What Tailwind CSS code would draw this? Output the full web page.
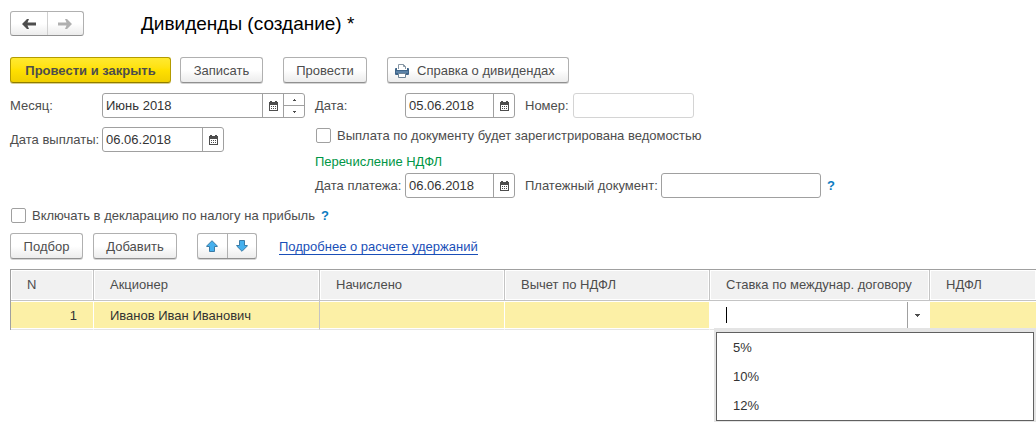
<!DOCTYPE html>
<html lang="ru">
<head>
<meta charset="utf-8">
<meta name="viewport" content="width=device-width, initial-scale=1">
<title>Дивиденды (создание) *</title>
<script src="https://cdn.jsdelivr.net/npm/@tailwindcss/browser@4"></script>
</head>
<body class="bg-white text-[#4d4d4d] font-['Liberation_Sans',Arial,sans-serif] text-[13px] leading-4">
<svg class="hidden" aria-hidden="true">
  <symbol id="calendar" viewBox="0 0 9 10">
    <path d="M0 1h9v9H0z M1 0h2v1H1z M6 0h2v1H6z" fill="#4d4d4d"/>
    <path d="M1 4h7v5H1z" fill="#fff"/>
    <path d="M2 5h1v1H2z M4 5h1v1H4z M6 5h1v1H6z M2 7h1v1H2z M4 7h1v1H4z M6 7h1v1H6z" fill="#4d4d4d"/>
  </symbol>
</svg>
<main class="min-h-screen pl-[10px] pt-[11px]">
  <header class="flex items-center h-[25px]">
    <div class="flex w-[74px] h-[25px] border border-[#b0b0b0] border-b-[#909090] rounded-[3px] bg-linear-to-b from-white from-50% to-[#ececec]">
      <button type="button" aria-label="Назад" class="flex-1 flex items-center justify-center border-r border-[#d0d0d0]">
        <svg class="w-[14px] h-[10px]" viewBox="0 0 14 10"><path d="M0 5 5 0h2L5.500 3.500H14v3H5.500L7 10H5z" fill="#4d4d4d"/></svg>
      </button>
      <button type="button" aria-label="Вперед" class="flex-1 flex items-center justify-center">
        <svg class="w-[14px] h-[10px]" viewBox="0 0 14 10"><path d="M14 5 9 0H7l1.500 3.500H0v3h8.500L7 10h2z" fill="#b0b0b0"/></svg>
      </button>
    </div>
    <h1 class="ml-[57px] text-[19px] leading-6 text-black">Дивиденды (создание) *</h1>
  </header>

  <div class="flex mt-[21px] h-[26px] whitespace-nowrap">
    <button type="button" class="w-[161px] pt-px font-bold rounded-[3px] border border-[#b39b00] border-b-[#8f7c00] bg-linear-to-b from-[#ffe92e] via-[#ffe000] to-[#f0cf00] shadow-[0_1px_0_#d8cf90]">Провести и закрыть</button>
    <button type="button" class="ml-[9px] w-[83px] pt-px rounded-[3px] border border-[#b0b0b0] border-b-[#909090] bg-linear-to-b from-white from-50% to-[#ececec] shadow-[0_1px_0_#d4d4d4]">Записать</button>
    <button type="button" class="ml-5 w-[84px] pt-px rounded-[3px] border border-[#b0b0b0] border-b-[#909090] bg-linear-to-b from-white from-50% to-[#ececec] shadow-[0_1px_0_#d4d4d4]">Провести</button>
    <button type="button" class="ml-5 w-[182px] pt-px flex items-center pl-[7px] gap-2 rounded-[3px] border border-[#b0b0b0] border-b-[#909090] bg-linear-to-b from-white from-50% to-[#ececec] shadow-[0_1px_0_#d4d4d4]">
      <svg class="w-[14px] h-[14px]" viewBox="0 0 14 14">
        <path d="M3.500 5V.5h5l2 2V5" fill="#fff" stroke="#8797a5"/><path d="M8.500.5v2h2" fill="none" stroke="#8797a5"/>
        <path d="M0 5q0-1 1-1h1v2h10V4h1q1 0 1 1v5q0 1-1 1H1q-1 0-1-1z" fill="#3f658a"/><path d="M1 7h12v2H1z" fill="#5c83a8"/>
        <path d="M3.500 9.500h7v4h-7z" fill="#fff" stroke="#6f8496"/>
      </svg>
      <span>Справка о дивидендах</span>
    </button>
  </div>

  <form class="mt-[10px] whitespace-nowrap">
    <div class="flex gap-[10px]">
      <div class="w-[295px] flex flex-col gap-[9px]">
        <div class="flex items-center h-[25px]">
          <label for="month" class="w-[92px]">Месяц:</label>
          <div class="flex flex-1 h-full border border-[#a0a0a0] rounded-[3px] overflow-hidden">
            <input id="month" value="Июнь 2018" class="flex-1 min-w-0 pl-[3px] text-[#333] outline-none">
            <button type="button" aria-label="Выбрать месяц" class="w-[21px] border-l border-[#a0a0a0] flex items-center justify-center"><svg class="w-[9px] h-[10px]"><use href="#calendar"/></svg></button>
            <div class="w-[21px] border-l border-[#a0a0a0] flex flex-col">
              <button type="button" aria-label="Больше" class="flex-1 border-b border-[#a0a0a0] flex items-center justify-center"><svg class="w-[3px] h-[2px]" viewBox="0 0 3 2"><path d="M1 0h1v1h1v1H0V1h1z" fill="#4d4d4d"/></svg></button>
              <button type="button" aria-label="Меньше" class="flex-1 flex items-center justify-center"><svg class="w-[3px] h-[2px]" viewBox="0 0 3 2"><path d="M0 0h3v1H2v1H1V1H0z" fill="#4d4d4d"/></svg></button>
            </div>
          </div>
        </div>
        <div class="flex items-center h-[25px]">
          <label for="paydate" class="w-[92px]">Дата выплаты:</label>
          <div class="flex w-[122px] h-full border border-[#a0a0a0] rounded-[3px] overflow-hidden">
            <input id="paydate" value="06.06.2018" class="flex-1 min-w-0 pl-[3px] text-[#333] outline-none">
            <button type="button" aria-label="Выбрать дату выплаты" class="w-[21px] border-l border-[#a0a0a0] flex items-center justify-center"><svg class="w-[9px] h-[10px]"><use href="#calendar"/></svg></button>
          </div>
        </div>
      </div>
      <div class="flex-1">
        <div class="flex items-center h-[25px]">
          <label for="date" class="w-[90px]">Дата:</label>
          <div class="flex w-[110px] h-full border border-[#a0a0a0] rounded-[3px] overflow-hidden">
            <input id="date" value="05.06.2018" class="flex-1 min-w-0 pl-[3px] text-[#333] outline-none">
            <button type="button" aria-label="Выбрать дату" class="w-[21px] border-l border-[#a0a0a0] flex items-center justify-center"><svg class="w-[9px] h-[10px]"><use href="#calendar"/></svg></button>
          </div>
          <label for="number" class="ml-[10px] w-12">Номер:</label>
          <input id="number" class="w-[121px] h-full px-[3px] border border-[#d4d4d4] rounded-[3px] outline-none">
        </div>
        <div class="flex items-start gap-[6px] mt-[10px] pl-px h-4">
          <input id="register" type="checkbox" class="appearance-none size-[15px] border border-[#a0a0a0] rounded-[2px] checked:bg-[#a0a0a0]">
          <label for="register">Выплата по документу будет зарегистрирована ведомостью</label>
        </div>
        <p class="mt-[10px] text-[#009646]">Перечисление НДФЛ</p>
        <div class="flex items-center h-[25px] mt-[3px]">
          <label for="transfer" class="w-[90px]">Дата платежа:</label>
          <div class="flex w-[110px] h-full border border-[#a0a0a0] rounded-[3px] overflow-hidden">
            <input id="transfer" value="06.06.2018" class="flex-1 min-w-0 pl-[3px] text-[#333] outline-none">
            <button type="button" aria-label="Выбрать дату платежа" class="w-[21px] border-l border-[#a0a0a0] flex items-center justify-center"><svg class="w-[9px] h-[10px]"><use href="#calendar"/></svg></button>
          </div>
          <label for="document" class="ml-[10px] w-[136px]">Платежный документ:</label>
          <input id="document" class="w-[160px] h-full px-[3px] border border-[#a0a0a0] rounded-[3px] outline-none">
          <button type="button" class="ml-[6px] font-bold text-[#0d7cc1]">?</button>
        </div>
      </div>
    </div>
    <div class="flex items-start gap-[6px] mt-[10px] pl-px h-4">
      <input id="declare" type="checkbox" class="appearance-none size-[15px] border border-[#a0a0a0] rounded-[2px] checked:bg-[#a0a0a0]">
      <label for="declare">Включать в декларацию по налогу на прибыль</label>
      <button type="button" class="font-bold text-[#0d7cc1]">?</button>
    </div>
  </form>

  <div class="flex items-center mt-[9px] h-[26px] whitespace-nowrap">
    <button type="button" class="w-[73px] h-full pt-px rounded-[3px] border border-[#b0b0b0] border-b-[#909090] bg-linear-to-b from-white from-50% to-[#ececec] shadow-[0_1px_0_#d4d4d4]">Подбор</button>
    <button type="button" class="ml-[10px] w-[84px] h-full pt-px rounded-[3px] border border-[#b0b0b0] border-b-[#909090] bg-linear-to-b from-white from-50% to-[#ececec] shadow-[0_1px_0_#d4d4d4]">Добавить</button>
    <div class="ml-5 flex w-[60px] h-full rounded-[3px] border border-[#b0b0b0] border-b-[#909090] bg-linear-to-b from-white from-50% to-[#ececec] shadow-[0_1px_0_#d4d4d4]">
      <button type="button" aria-label="Вверх" class="flex-1 flex items-center justify-center border-r border-[#b0b0b0]"><svg class="w-3 h-3" viewBox="0 0 12 12"><path d="M6 .7 11.300 6v.5H8.500v5h-5v-5H.7V6z" fill="#45b0ee" stroke="#3a7ba6"/></svg></button>
      <button type="button" aria-label="Вниз" class="flex-1 flex items-center justify-center"><svg class="w-3 h-3" viewBox="0 0 12 12"><path d="M6 11.300 11.300 6v-.5H8.500v-5h-5v5H.7V6z" fill="#45b0ee" stroke="#3a7ba6"/></svg></button>
    </div>
    <a href="#" class="ml-[22px] mt-px leading-[15px] border-b border-[#1a4fb8] text-[#1a4fb8]">Подробнее о расчете удержаний</a>
  </div>

  <table class="mt-[10px] w-full table-fixed border-separate border-spacing-0 border-t border-l border-[#a0a0a0] whitespace-nowrap">
    <colgroup><col class="w-[83px]"><col class="w-[226px]"><col class="w-[185px]"><col class="w-[205px]"><col class="w-[220px]"><col></colgroup>
    <thead>
      <tr class="h-[31px] text-left">
        <th class="pl-4 font-normal bg-[#f1f1f1] border-r border-b border-[#c4c4c4] shadow-[inset_0_0_0_1px_#fff]">N</th>
        <th class="pl-4 font-normal bg-[#f1f1f1] border-r border-b border-[#c4c4c4] shadow-[inset_0_0_0_1px_#fff]">Акционер</th>
        <th class="pl-4 font-normal bg-[#f1f1f1] border-r border-b border-[#c4c4c4] shadow-[inset_0_0_0_1px_#fff]">Начислено</th>
        <th class="pl-4 font-normal bg-[#f1f1f1] border-r border-b border-[#c4c4c4] shadow-[inset_0_0_0_1px_#fff]">Вычет по НДФЛ</th>
        <th class="pl-4 font-normal bg-[#f1f1f1] border-r border-b border-[#c4c4c4] shadow-[inset_0_0_0_1px_#fff]">Ставка по междунар. договору</th>
        <th class="pl-4 font-normal bg-[#f1f1f1] border-b border-[#c4c4c4] shadow-[inset_0_0_0_1px_#fff]">НДФЛ</th>
      </tr>
    </thead>
    <tbody>
      <tr class="h-[29px] text-[#333]">
        <td class="pt-[2px] pr-4 text-right bg-[#fcf0a6] border-r border-r-white border-b border-b-[#e4e4e4] shadow-[inset_0_1px_0_#fff,inset_0_-1px_0_#fff]">1</td>
        <td class="pt-[2px] pl-4 bg-[#fcf0a6] border-r border-r-[#c4c4c4] border-b border-b-[#e4e4e4] shadow-[inset_0_1px_0_#fff,inset_0_-1px_0_#fff]">Иванов Иван Иванович</td>
        <td class="bg-[#fcf0a6] border-r border-r-white border-b border-b-[#e4e4e4] shadow-[inset_0_1px_0_#fff,inset_0_-1px_0_#fff]"></td>
        <td class="bg-[#fcf0a6] border-r border-r-white border-b border-b-[#e4e4e4] shadow-[inset_0_1px_0_#fff,inset_0_-1px_0_#fff]"></td>
        <td class="relative p-0 border-b border-[#e4e4e4]">
          <div class="flex items-center h-[26px] pl-4">
            <span class="w-px h-4 bg-black"></span>
            <input aria-label="Ставка по междунар. договору" role="combobox" aria-expanded="true" aria-controls="rates" class="flex-1 min-w-0 h-full outline-none caret-transparent">
            <button type="button" aria-label="Открыть список" class="w-[23px] h-full border-l border-[#a0a0a0] flex items-center justify-center pr-[3px]"><svg class="w-[5px] h-[3px]" viewBox="0 0 5 3"><path d="M0 0h5v1H4v1H3v1H2V2H1V1H0z" fill="#4d4d4d"/></svg></button>
          </div>
          <div class="absolute top-full left-1 w-[322px] -mt-px pt-1 px-[2px] pb-px bg-[#e4e4e4]">
            <ul id="rates" role="listbox" aria-label="Ставка" class="bg-white border border-[#606060] text-[#333]">
              <li role="option" class="px-4 h-[29px] leading-[29px]">5%</li>
              <li role="option" class="px-4 h-[29px] leading-[29px]">10%</li>
              <li role="option" class="px-4 h-[29px] leading-[29px]">12%</li>
            </ul>
          </div>
        </td>
        <td class="bg-[#fcf0a6] border-b border-b-[#e4e4e4] shadow-[inset_0_1px_0_#fff,inset_0_-1px_0_#fff]"></td>
      </tr>
    </tbody>
  </table>
</main>
</body>
</html>
